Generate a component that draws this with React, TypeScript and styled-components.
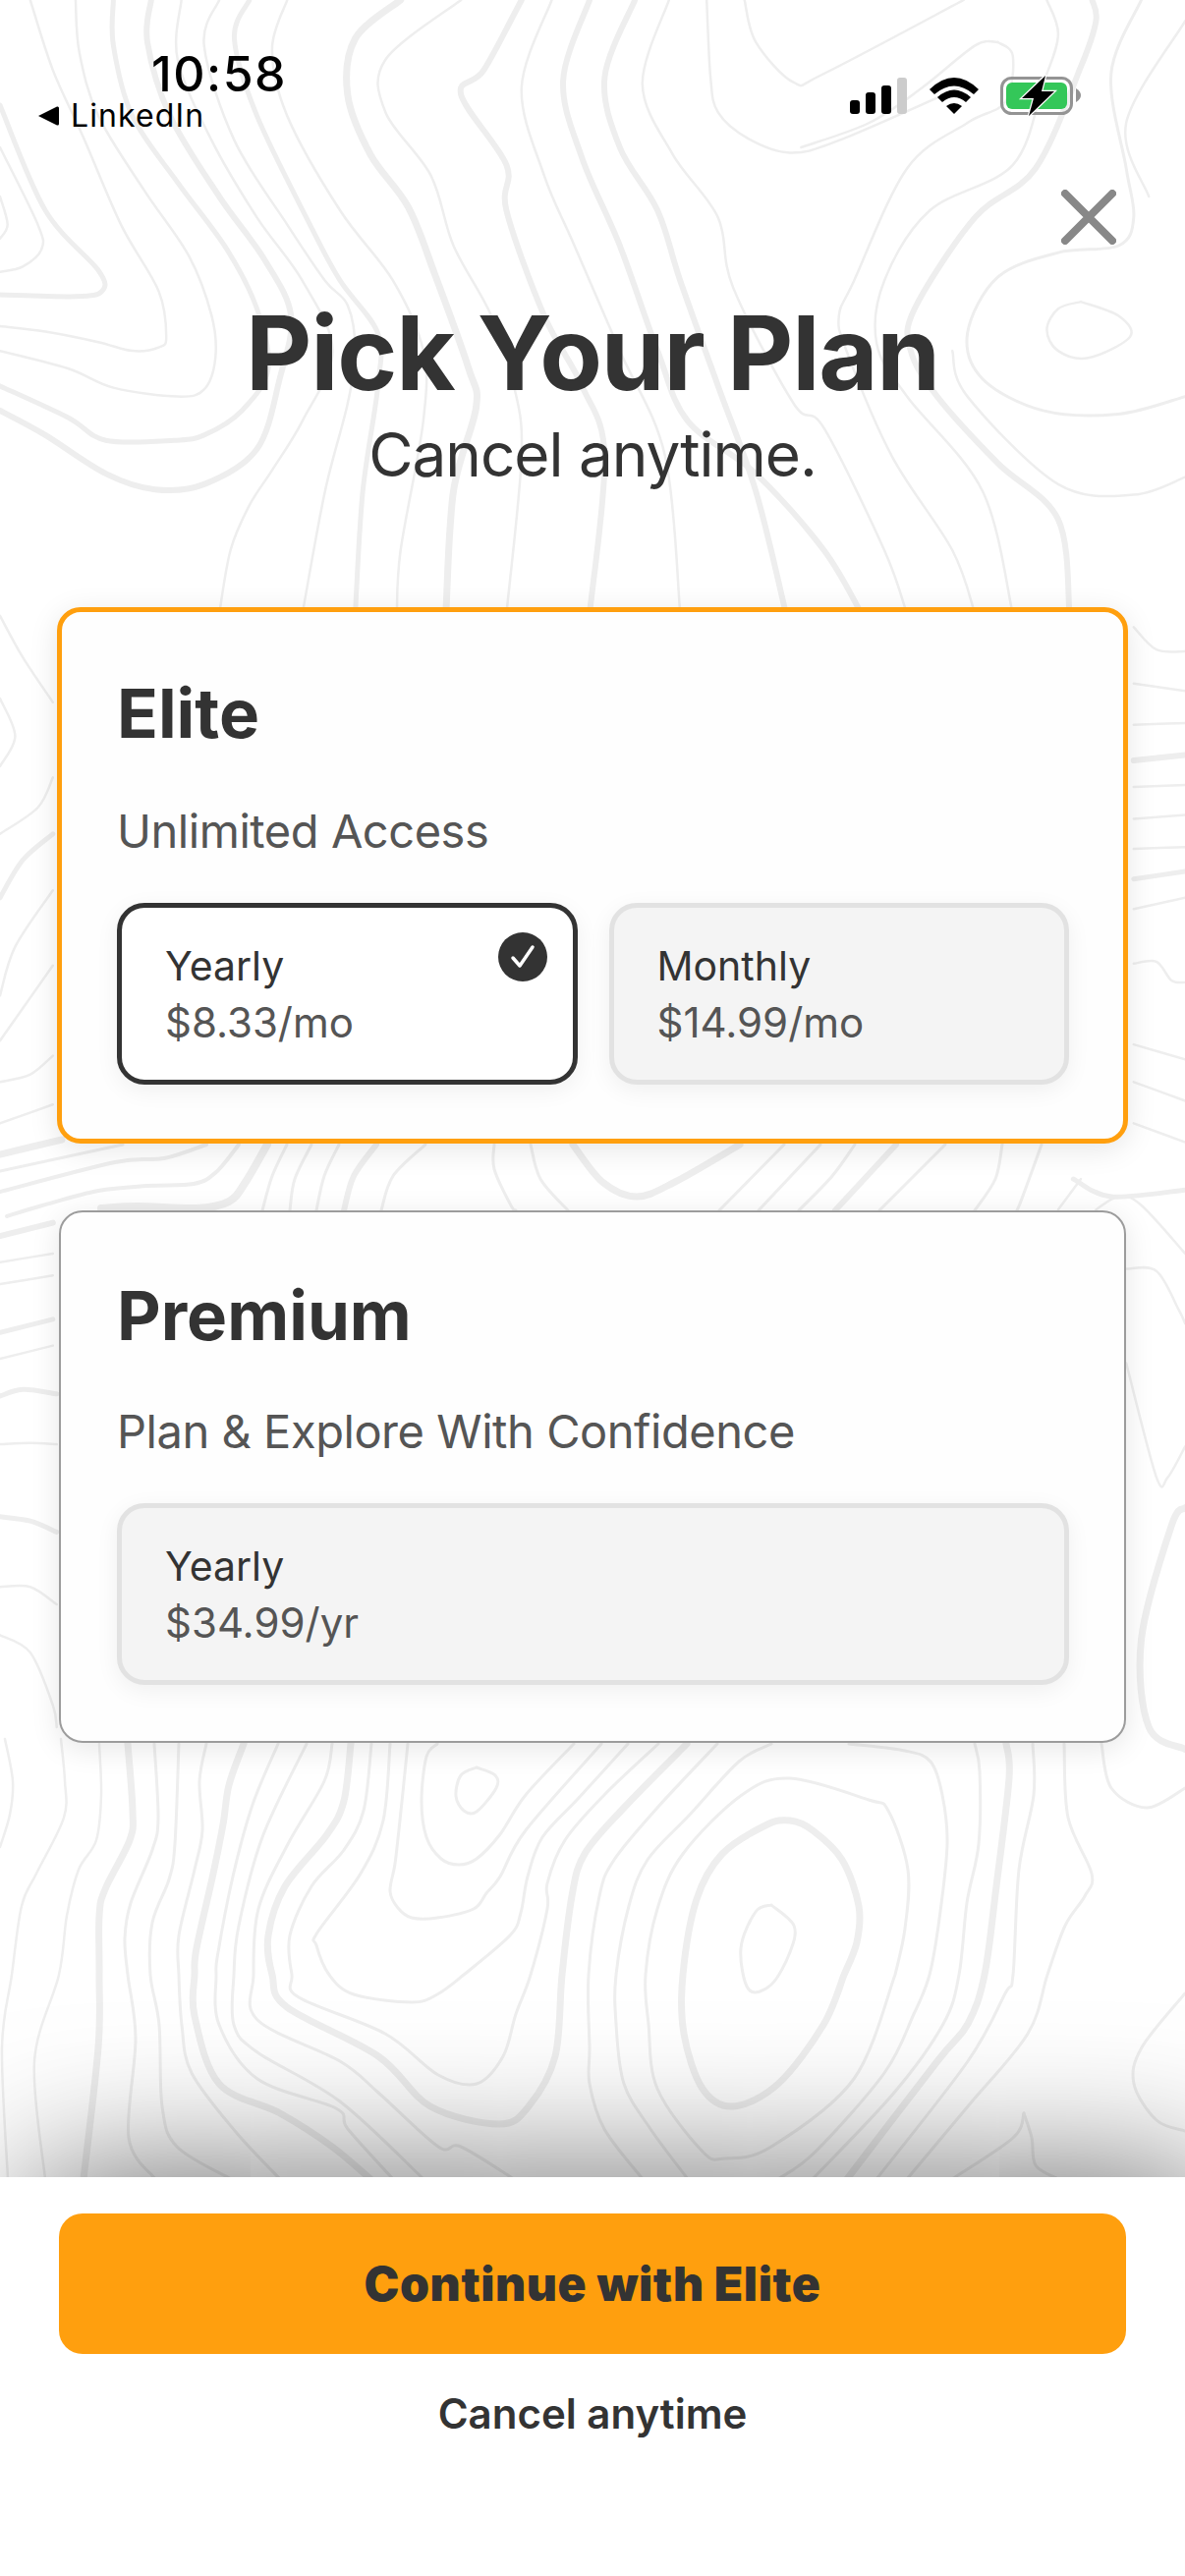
import React from 'react';
import styled, { createGlobalStyle } from 'styled-components';

const GlobalStyle = createGlobalStyle`
  html, body {
    margin: 0;
    padding: 0;
    background: #fff;
  }
  * {
    box-sizing: border-box;
  }
`;

const Page = styled.div`
  position: relative;
  width: 1206px;
  height: 2622px;
  overflow: hidden;
  display: flex;
  flex-direction: column;
  background: #fff;
  color: #333;
  font-family: Inter, 'Liberation Sans', sans-serif;
`;

const Topo = styled.svg`
  position: absolute;
  left: 0;
  top: 0;
  fill: none;
  stroke: #eeeeee;
  stroke-linecap: round;
  stroke-linejoin: round;
`;

const StatusBar = styled.div`
  position: relative;
  height: 136px;
  padding: 50px 100px 0 38px;
  display: flex;
  justify-content: space-between;
  color: #000;
`;

const Clock = styled.div`
  margin-left: 116px;
  font-size: 50px;
  line-height: 50px;
  font-weight: 500;
  letter-spacing: 1.5px;
`;

const BackLink = styled.div`
  display: flex;
  align-items: center;
  gap: 12px;
  font-size: 32px;
  line-height: 36px;
  letter-spacing: 1.1px;
`;

const StatusIcons = styled.svg`
  margin-top: 26px;
`;

const CloseRow = styled.div`
  position: relative;
  margin-top: 57px;
  padding-right: 70px;
  display: flex;
  justify-content: flex-end;
`;

const Header = styled.header`
  position: relative;
  margin-top: 55px;
  text-align: center;
`;

const Title = styled.h1`
  margin: 0;
  font-size: 104px;
  line-height: 110px;
  font-weight: 700;
  letter-spacing: -1.2px;
`;

const Subtitle = styled.p`
  margin: 14px 0 0;
  font-size: 62px;
  line-height: 70px;
  font-weight: 400;
  letter-spacing: -1px;
`;

const Card = styled.section<{ $featured?: boolean }>`
  position: relative;
  margin: ${(p) => (p.$featured ? '120px 58px 0' : '68px 60px 0')};
  padding: ${(p) => (p.$featured ? '65px 55px 55px 56px' : '67px 56px 57px 57px')};
  border: ${(p) => (p.$featured ? '5px solid #ff9f0e' : '2px solid #9c9c9c')};
  border-radius: 24px;
  background: #fefefe;
  box-shadow: 0 6px 30px rgba(0, 0, 0, 0.1);
`;

const PlanName = styled.h2<{ $featured?: boolean }>`
  margin: 0 0 ${(p) => (p.$featured ? '54px' : '52px')};
  font-size: 69px;
  line-height: 76px;
  font-weight: 700;
`;

const PlanBlurb = styled.p`
  margin: 0 0 45px;
  font-size: 47px;
  line-height: 56px;
  letter-spacing: -0.45px;
  color: #555;
`;

const Options = styled.div<{ $cols: number }>`
  display: grid;
  grid-template-columns: repeat(${(p) => p.$cols}, 1fr);
  gap: 32px;
`;

const Option = styled.div<{ $selected?: boolean }>`
  position: relative;
  height: 185px;
  padding: 34px 44px 0;
  border: 5px solid ${(p) => (p.$selected ? '#333' : '#e2e2e2')};
  border-radius: 28px;
  background: ${(p) => (p.$selected ? '#fff' : '#f4f4f4')};
  box-shadow: 0 6px 24px rgba(0, 0, 0, 0.06);
`;

const OptionName = styled.div`
  font-size: 41px;
  line-height: 50px;
  color: #333;
`;

const OptionPrice = styled.div`
  margin-top: 8px;
  font-size: 42px;
  line-height: 50px;
  color: #555;
`;

const CheckBadge = styled.svg`
  position: absolute;
  top: 25px;
  right: 26px;
`;

const Sheet = styled.footer`
  position: relative;
  margin-top: auto;
  height: 406px;
  padding: 37px 60px 0;
  background: #fff;
  box-shadow: 30px 0 150px rgba(0, 0, 0, 0.6);
  text-align: center;
`;

const ContinueButton = styled.div`
  height: 143px;
  border-radius: 24px;
  background: #ff9f0e;
  display: flex;
  align-items: center;
  justify-content: center;
  font-size: 48px;
  font-weight: 900;
  letter-spacing: 0.6px;
  color: #333;
`;

const CancelNote = styled.div`
  margin-top: 36px;
  font-size: 42px;
  line-height: 50px;
  font-weight: 600;
  color: #333;
`;

// contour lines traced from the picture: [stroke width, "x,y x,y ..."]
type Line = [number, string];
type Layer = { sx: number; y0: number; sy: number; lines: Line[] };

const layers: Layer[] = [
  {
    sx: 1.3,
    y0: 0,
    sy: 2.8,
    lines: [
      [5, '0,300 60,600 130,770 135,830 100,845 0,840'],
      [2.5, '0,560 10,640 0,680'],
      [2.5, '0,420 50,640 55,710 30,760 0,775'],
      [2.5, '40,0 70,200 110,390 160,640 210,830 220,960 210,990 175,1000 130,975 60,945 0,930'],
      [2.5, '100,0 105,150 130,330 190,540 250,730 280,900 285,1020 270,1110 235,1130 150,1105 90,1050 0,1000'],
      [5, '150,0 150,130 175,330 235,520 300,710 340,880 355,1050 320,1170 270,1240 230,1255 140,1255 90,1190 0,1100'],
      [6, '200,0 195,120 225,330 290,560 350,740 385,900 370,1080 340,1280 270,1380 205,1395 140,1350 60,1240 0,1170'],
      [2.5, '240,0 235,170 280,400 340,620 400,800 440,1000 400,1200 360,1340 330,1440 305,1568 290,1750'],
      [2.5, '290,0 270,130 310,400 380,640 430,800 460,870 470,1000 460,1150 430,1400 400,1750'],
      [5, '330,0 310,110 340,330 410,640 450,800 500,950 500,1100 480,1400 470,1750'],
      [2.5, '380,0 360,140 380,330 450,600 520,800 560,1000 560,1200 530,1568 525,1750'],
      [7, '530,0 470,110 460,270 490,440 540,590 575,780 620,1050 630,1160 600,1400 590,1750'],
      [2.5, '610,0 510,170 510,320 570,500 600,700 650,900 680,1100 690,1300 670,1750'],
      [6, '690,0 640,200 610,270 670,470 670,600 720,900 770,1100 800,1300 780,1750'],
      [2.5, '730,0 690,250 720,500 760,700 820,1000 880,1300 900,1750'],
      [6, '780,0 745,230 770,450 820,700 870,1000 910,1200 1000,1350 1090,1568 1140,1750'],
      [6, '840,0 800,220 820,420 870,600 900,800 950,1100 1000,1400 1040,1750'],
      [2.5, '885,0 850,240 890,440 950,620 970,820 1050,1150 1090,1220 1170,1568 1200,1750'],
      [2.5, '985,0 1000,120 1050,235 1090,210 1275,0'],
      [2.5, '935,0 940,220 950,320 990,395 1045,435 1110,400 1280,240'],
      [2.5, '1320,120 1290,130 1220,250 1150,350 1060,420'],
      [2.5, '1320,120 1340,160 1330,290 1280,350 1200,480 1130,800 1110,900 1120,1000 1180,1300 1260,1568 1290,1750'],
      [6, '1445,0 1450,60 1430,190 1370,480 1290,620 1210,880 1205,1000 1240,1130 1320,1320 1400,1480 1415,1750'],
      [2.5, '1385,0 1400,100 1380,240 1340,470 1230,600 1170,800 1160,980 1200,1130 1300,1400 1340,1750'],
      [3, '1510,0 1470,210 1490,480 1500,620 1480,700 1400,720 1320,790 1280,950 1300,1080 1380,1170 1480,1180 1568,1130'],
      [2.5, '1568,60 1490,350 1520,560'],
      [2.5, '1430,860 1480,900 1495,960 1440,1020 1400,1000 1385,940 1400,880 1430,860'],
      [2.5, '1260,1000 1280,1130 1400,1380 1500,1410 1568,1360'],
    ],
  },
  {
    sx: 1.3,
    y0: 600,
    sy: 2.613,
    lines: [
      [2.5, '0,70 30,180 70,300'],
      [2.5, '0,290 20,390 0,470'],
      [2.5, '70,500 50,580 0,650'],
      [5, '70,650 30,720 0,820'],
      [2.5, '70,800 20,950 0,1080'],
      [2.5, '70,1000 0,1200'],
      [2.5, '70,1240 40,1290 0,1310'],
      [2.5, '70,1370 0,1420'],
      [2.5, '1500,100 1530,160 1568,165'],
      [2.5, '1500,250 1568,270'],
      [2.5, '1500,360 1568,355'],
      [6, '1500,455 1568,440'],
      [2.5, '1500,525 1568,520'],
      [2.5, '1500,610 1568,600'],
      [2.5, '1500,690 1568,685'],
      [5, '1500,770 1568,750'],
      [2.5, '1500,850 1568,820'],
      [2.5, '1500,995 1530,990 1550,1040 1568,1045'],
      [2.5, '1500,1210 1568,1250'],
      [2.5, '1500,1310 1568,1360'],
      [2.5, '1500,1420 1568,1470'],
    ],
  },
  {
    sx: 1.3,
    y0: 1200,
    sy: 2.24,
    lines: [
      [6, '0,130 70,100'],
      [2.5, '0,190 70,170'],
      [2.5, '0,240 70,220'],
      [5, '0,350 70,320'],
      [2.5, '0,410 70,380'],
      [5, '0,495 30,480 75,490'],
      [2.5, '0,605 40,602 75,605'],
      [5, '0,770 40,780 75,805'],
      [2.5, '0,930 40,930 75,970'],
      [2.5, '0,1040 40,1080 70,1200 75,1250'],
      [2.5, '1400,70 1430,0'],
      [2.5, '1450,70 1480,40 1510,60 1568,170'],
      [2.5, '1490,205 1530,210 1560,300 1568,330'],
      [2.5, '1490,420 1530,680 1545,680 1568,610'],
      [7, '1568,750 1550,790 1510,1050 1520,1250 1568,1300'],
      [5, '1420,0 1470,40 1568,25'],
    ],
  },
  {
    // gap between the two cards, page coords
    sx: 1,
    y0: 0,
    sy: 1,
    lines: [
      [7, '0,1175 63,1160'],
      [3, '0,1192 125,1165'],
      [4, '0,1213 117,1183 167,1179 210,1165'],
      [4, '7,1238 43,1227 100,1212 150,1207 197,1205 220,1193 243,1165'],
      [8, '103,1230 140,1228 200,1230 233,1223 250,1203 272,1165'],
      [3, '267,1232 277,1197 292,1165'],
      [3, '295,1232 300,1200 317,1165'],
      [3, '322,1232 330,1197 345,1165'],
      [6, '350,1232 360,1197 383,1165'],
      [3, '388,1232 400,1197 433,1165'],
      [3, '503,1165 503,1190 520,1227 525,1232'],
      [3, '540,1165 550,1200 578,1232'],
      [7, '583,1165 613,1203 648,1218 687,1203 753,1165'],
      [3, '732,1232 798,1165'],
      [3, '772,1232 835,1165'],
      [3, '813,1232 847,1197 870,1165'],
      [6, '850,1232 912,1165'],
      [3, '895,1232 962,1165'],
      [3, '992,1232 1013,1200 1020,1165'],
      [3, '1035,1232 1040,1220 1060,1165'],
    ],
  },
  {
    // area under the cards down to the sheet, page coords
    sx: 1,
    y0: 0,
    sy: 1,
    lines: [
      [2.5, '5,1770 13,1813 10,1847 0,1880'],
      [2.5, '62,1770 66,1813 65,1850 37,1907 22,1940 12,2010 2,2084 8,2218'],
      [2.5, '101,1775 103,1827 98,1873 80,1903 68,1950 60,2010 35,2098 46,2218'],
      [7, '130,1775 135,1843 132,1873 107,1923 101,1950 101,2010 100,2084 85,2218'],
      [3, '157,1775 161,1850 155,1883 133,1937 127,1973 130,2010 138,2075 131,2176 158,2218'],
      [3, '182,1775 178,1877 172,1913 155,1957 153,2010 162,2061 165,2144 180,2185 235,2218'],
      [3, '210,1775 203,1813 206,1863 198,1903 182,1970 182,2010 185,2061 195,2110 240,2170 285,2218'],
      [7, '248,1775 233,1817 227,1857 217,1907 200,1983 198,2010 198,2052 223,2121 285,2151 338,2185 377,2218'],
      [3, '283,1775 257,1837 237,1910 222,1987 220,2010 223,2061 262,2116 342,2146 354,2167 400,2218'],
      [3, '312,1775 267,1870 243,1960 238,2010 238,2061 262,2089 346,2139 431,2218'],
      [3, '338,1775 330,1813 293,1877 263,1943 258,2010 262,2056 346,2098 385,2130 446,2185 469,2185 523,2218'],
      [7, '357,1775 350,1833 333,1867 290,1920 273,1970 277,2010 292,2043 385,2093 438,2144 508,2162 538,2144 565,2093 572,2010 582,1930 595,1887 635,1840 699,1775'],
      [3, '378,1775 370,1843 350,1883 317,1920 295,1970 297,2010 304,2033 392,2070 446,2112 485,2121 512,2093 525,2050 540,2010 557,1943 557,1917 575,1873 615,1827 670,1775'],
      [3, '397,1775 390,1853 367,1907 323,1967 322,1980 335,2010 360,2030 419,2038 445,2030 472,2010 519,1970 530,1947 537,1910 552,1870 589,1830 639,1775'],
      [3, '415,1775 407,1853 402,1897 397,1925 405,1942 419,1952 445,1952 482,1943 495,1927 509,1910 535,1863 612,1775'],
      [3, '445,1775 434,1788 429,1833 434,1870 449,1892 467,1898 485,1892 509,1867 535,1827 584,1775'],
      [3, '485,1799 504,1807 505,1820 485,1844 472,1843 464,1828 469,1807 485,1799'],
      [3, '730,1775 669,1840 625,1893 610,1930 599,2010 600,2084 600,2121 615,2167 654,2218'],
      [3, '785,1775 752,1793 702,1847 659,1893 640,1940 627,2010 627,2060 635,2121 662,2167 700,2218'],
      [3, '911,2010 921,1963 924,1903 904,1843 884,1832 804,1810 755,1827 695,1887 669,1943 657,2010 660,2060 669,2126 715,2190 738,2197 785,2185 869,2116 911,2010'],
      [7, '859,2010 872,1977 874,1940 857,1893 827,1863 804,1853 779,1858 735,1887 709,1933 695,2010 696,2070 715,2126 746,2144 792,2121 838,2061 859,2010'],
      [3, '785,1939 808,1960 804,1987 785,2020 762,2025 754,1983 769,1946 785,1939'],
      [3, '864,1775 921,1782 947,1793 959,1827 964,1877 956,1953 946,2010 930,2050 900,2110 830,2190 792,2218'],
      [3, '992,1775 997,1803 996,1877 984,1937 976,2010 960,2060 910,2130 827,2218'],
      [7, '1024,1775 1027,1810 1014,1920 1002,2010 985,2060 954,2098 862,2218'],
      [3, '1051,1775 1052,1827 1037,1903 1031,2010 1023,2029 985,2098 892,2218'],
      [3, '1083,1775 1087,1850 1111,1907 1104,1930 1084,1960 1066,2010 1046,2070 985,2144 923,2218'],
      [3, '1121,1775 1131,1820 1167,1840 1206,1820'],
      [3, '1206,2029 1162,2084 1154,2121 1177,2158 1206,2169'],
      [3, '1042,2151 1031,2176 969,2218'],
      [3, '1042,2151 1050,2176 1054,2204 1077,2218'],
    ],
  },
];

// Catmull-Rom through the traced points, crop coords mapped back to the page
const smoothPath = (raw: string, { sx, y0, sy }: Layer) => {
  const pts = raw.split(' ').map((s) => {
    const [x, y] = s.split(',').map(Number);
    return [x / sx, y0 + y / sy];
  });
  let d = `M${pts[0][0].toFixed(1)} ${pts[0][1].toFixed(1)}`;
  for (let i = 0; i < pts.length - 1; i++) {
    const p0 = pts[i - 1] || pts[i];
    const p1 = pts[i];
    const p2 = pts[i + 1];
    const p3 = pts[i + 2] || p2;
    const c1 = [p1[0] + (p2[0] - p0[0]) / 6, p1[1] + (p2[1] - p0[1]) / 6];
    const c2 = [p2[0] - (p3[0] - p1[0]) / 6, p2[1] - (p3[1] - p1[1]) / 6];
    d += `C${c1[0].toFixed(1)} ${c1[1].toFixed(1)} ${c2[0].toFixed(1)} ${c2[1].toFixed(1)} ${p2[0].toFixed(1)} ${p2[1].toFixed(1)}`;
  }
  return d;
};

const TopoBackground = () => (
  <Topo width="1206" height="2622" viewBox="0 0 1206 2622">
    {layers.map((layer, n) =>
      layer.lines.map(([w, pts], i) => <path key={`${n}-${i}`} d={smoothPath(pts, layer)} strokeWidth={w} />),
    )}
  </Topo>
);

const StatusGlyphs = () => (
  <StatusIcons width="241" height="44" viewBox="865 76 241 44">
    <rect x="865" y="102" width="10" height="14" rx="3" fill="#000" />
    <rect x="881" y="94" width="10" height="22" rx="3" fill="#000" />
    <rect x="897" y="87" width="10" height="29" rx="3" fill="#000" />
    <rect x="913" y="79" width="10" height="37" rx="3" fill="#ccc" />
    <path d="M946 91 Q971 67 996 91 L991 96 Q971 79 951 96Z" fill="#000" />
    <path d="M954 99 Q971 84 988 99 L983 104 Q971 94 959 104Z" fill="#000" />
    <path d="M963 108 Q971 102 979 108 L971 116Z" fill="#000" />
    <rect x="1019.5" y="79.5" width="71" height="36" rx="10" fill="none" stroke="#949494" strokeWidth="3" />
    <path d="M1095 90 Q1100 93 1100 97 Q1100 101 1095 104Z" fill="#949494" />
    <rect x="1024" y="84" width="62" height="27" rx="6" fill="#34c759" />
    <path d="M1064 77 L1040 100 H1052 L1047 118 L1073 93 H1060Z" fill="#000" stroke="#fff" strokeWidth="2.5" paintOrder="stroke" />
  </StatusIcons>
);

export default function App() {
  return (
    <Page>
      <GlobalStyle />
      <TopoBackground />

      <StatusBar>
        <div>
          <Clock>10:58</Clock>
          <BackLink>
            <svg width="22" height="22" viewBox="0 0 22 22">
              <path d="M1 11 L20 1.5 Q22 1 22 3 V19 Q22 21 20 20.5Z" fill="#000" />
            </svg>
            LinkedIn
          </BackLink>
        </div>
        <StatusGlyphs />
      </StatusBar>

      <CloseRow>
        <svg width="56" height="56" viewBox="0 0 56 56">
          <path d="M4 4 L52 52 M52 4 L4 52" stroke="#888" strokeWidth="8" strokeLinecap="round" />
        </svg>
      </CloseRow>

      <Header>
        <Title>Pick Your Plan</Title>
        <Subtitle>Cancel anytime.</Subtitle>
      </Header>

      <Card $featured>
        <PlanName $featured>Elite</PlanName>
        <PlanBlurb>Unlimited Access</PlanBlurb>
        <Options $cols={2}>
          <Option $selected>
            <OptionName>Yearly</OptionName>
            <OptionPrice>$8.33/mo</OptionPrice>
            <CheckBadge width="50" height="50" viewBox="0 0 50 50">
              <circle cx="25" cy="25" r="25" fill="#333" />
              <path d="M15 26 L22 34 L35 15" fill="none" stroke="#fff" strokeWidth="3.5" strokeLinecap="round" strokeLinejoin="round" />
            </CheckBadge>
          </Option>
          <Option>
            <OptionName>Monthly</OptionName>
            <OptionPrice>$14.99/mo</OptionPrice>
          </Option>
        </Options>
      </Card>

      <Card>
        <PlanName>Premium</PlanName>
        <PlanBlurb>Plan &amp; Explore With Confidence</PlanBlurb>
        <Options $cols={1}>
          <Option>
            <OptionName>Yearly</OptionName>
            <OptionPrice>$34.99/yr</OptionPrice>
          </Option>
        </Options>
      </Card>

      <Sheet>
        <ContinueButton>Continue with Elite</ContinueButton>
        <CancelNote>Cancel anytime</CancelNote>
      </Sheet>
    </Page>
  );
}
